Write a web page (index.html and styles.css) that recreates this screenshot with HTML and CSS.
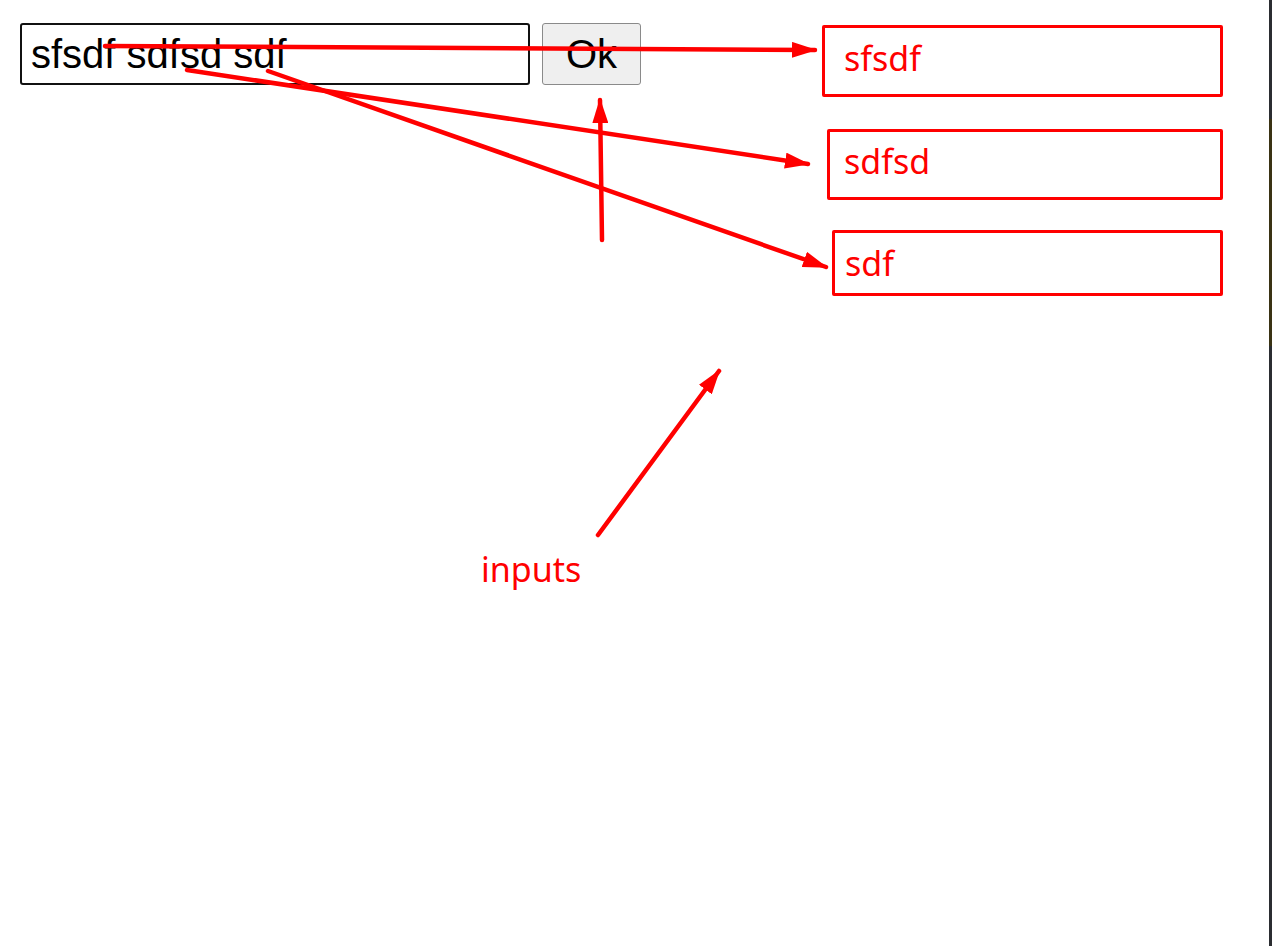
FILE: index.html
```html
<!DOCTYPE html>
<html lang="en">
<head>
    <meta charset="UTF-8">
    <meta name="viewport" content="width=device-width, initial-scale=1.0">
    <title>Split inputs</title>
    <link rel="stylesheet" href="styles.css">
</head>
<body>

    <div class="page">
        <div class="toolbar">
            <form class="entry">
                <input class="entry-field" id="entryField" type="text" value="sfsdf sdfsd sdf">
                <button class="entry-button" type="button">Ok</button>
            </form>

            <!-- one box per word of the input -->
            <div class="notes">
                <div class="note note-first">sfsdf</div>
                <div class="note note-second">sdfsd</div>
                <div class="note note-third">sdf</div>
            </div>
        </div>

        <div class="label">inputs</div>

        <!-- annotation arrows drawn over the page -->
        <svg class="arrows" width="1269" height="946" viewBox="0 0 1269 946">
            <defs>
                <marker id="head" markerUnits="userSpaceOnUse" markerWidth="26" markerHeight="16"
                        refX="23" refY="8" orient="auto">
                    <path d="M0,0 L25,8 L0,16 z" fill="#ff0000"/>
                </marker>
            </defs>
            <line x1="105" y1="46" x2="815" y2="50" marker-end="url(#head)"/>
            <line x1="187" y1="70" x2="808" y2="164" marker-end="url(#head)"/>
            <line x1="268" y1="71" x2="826" y2="267" marker-end="url(#head)"/>
            <line x1="602" y1="240" x2="600" y2="100" marker-end="url(#head)"/>
            <line x1="598" y1="535" x2="719" y2="371" marker-end="url(#head)"/>
        </svg>
    </div>

    <div class="edge">
        <div class="edge-mark"></div>
    </div>

    <script>
        // Put the caret at the end of the typed text
        const field = document.getElementById('entryField');
        field.focus();
        field.setSelectionRange(field.value.length, field.value.length);
    </script>

</body>
</html>
```

FILE: styles.css
```css
/* Global Reset */
* {
    margin: 0;
    padding: 0;
    box-sizing: border-box;
}

body {
    display: flex;
    height: 946px;
    overflow: hidden;
    background-color: #ffffff;
    font-family: 'Liberation Sans', Arial, sans-serif;
}

.page {
    position: relative;
    flex: 1;
    height: 100%;
}

.toolbar {
    display: flex;
    align-items: flex-start;
    padding: 23px 46px 0 20px;
}

/* Input and button */
.entry {
    display: flex;
    gap: 12px;
}

.entry-field {
    width: 510px;
    height: 62px;
    padding: 0 9px;
    border: 2px solid #111111;
    border-radius: 3px;
    font-family: 'Liberation Sans', Arial, sans-serif;
    font-size: 40px;
    color: #000000;
    caret-color: #000000;
    background: #ffffff;
    outline: none;
}

.entry-button {
    width: 99px;
    height: 62px;
    border: 1px solid #8a8a8a;
    border-radius: 3px;
    background-color: #efefef;
    font-family: 'Liberation Sans', Arial, sans-serif;
    font-size: 40px;
    color: #000000;
}

/* Red annotation boxes */
.notes {
    margin-left: auto;
    margin-top: 2px;
    display: flex;
    flex-direction: column;
    align-items: flex-end;
}

.note {
    border: 3px solid #ff0000;
    border-radius: 2px;
    color: #ff0000;
    font-family: 'Noto Sans', 'Open Sans', sans-serif;
    font-size: 34px;
    line-height: 34px;
}

.note-first {
    width: 401px;
    height: 72px;
    padding: 13px 0 0 19px;
}

.note-second {
    width: 396px;
    height: 71px;
    margin-top: 32px;
    padding: 12px 0 0 14px;
}

.note-third {
    width: 391px;
    height: 66px;
    margin-top: 30px;
    padding: 13px 0 0 10px;
}

.label {
    position: absolute;
    left: 481px;
    top: 552px;
    color: #ff0000;
    font-family: 'Noto Sans', 'Open Sans', sans-serif;
    font-size: 34px;
    line-height: 34px;
}

.arrows {
    position: absolute;
    top: 0;
    left: 0;
    pointer-events: none;
}

.arrows line {
    stroke: #ff0000;
    stroke-width: 4.5;
    stroke-linecap: round;
}

/* Dark strip on the right edge */
.edge {
    width: 3px;
    height: 100%;
    background-color: #2b2d31;
}

.edge-mark {
    margin-top: 119px;
    height: 227px;
    background-color: #3a3314;
}
```
